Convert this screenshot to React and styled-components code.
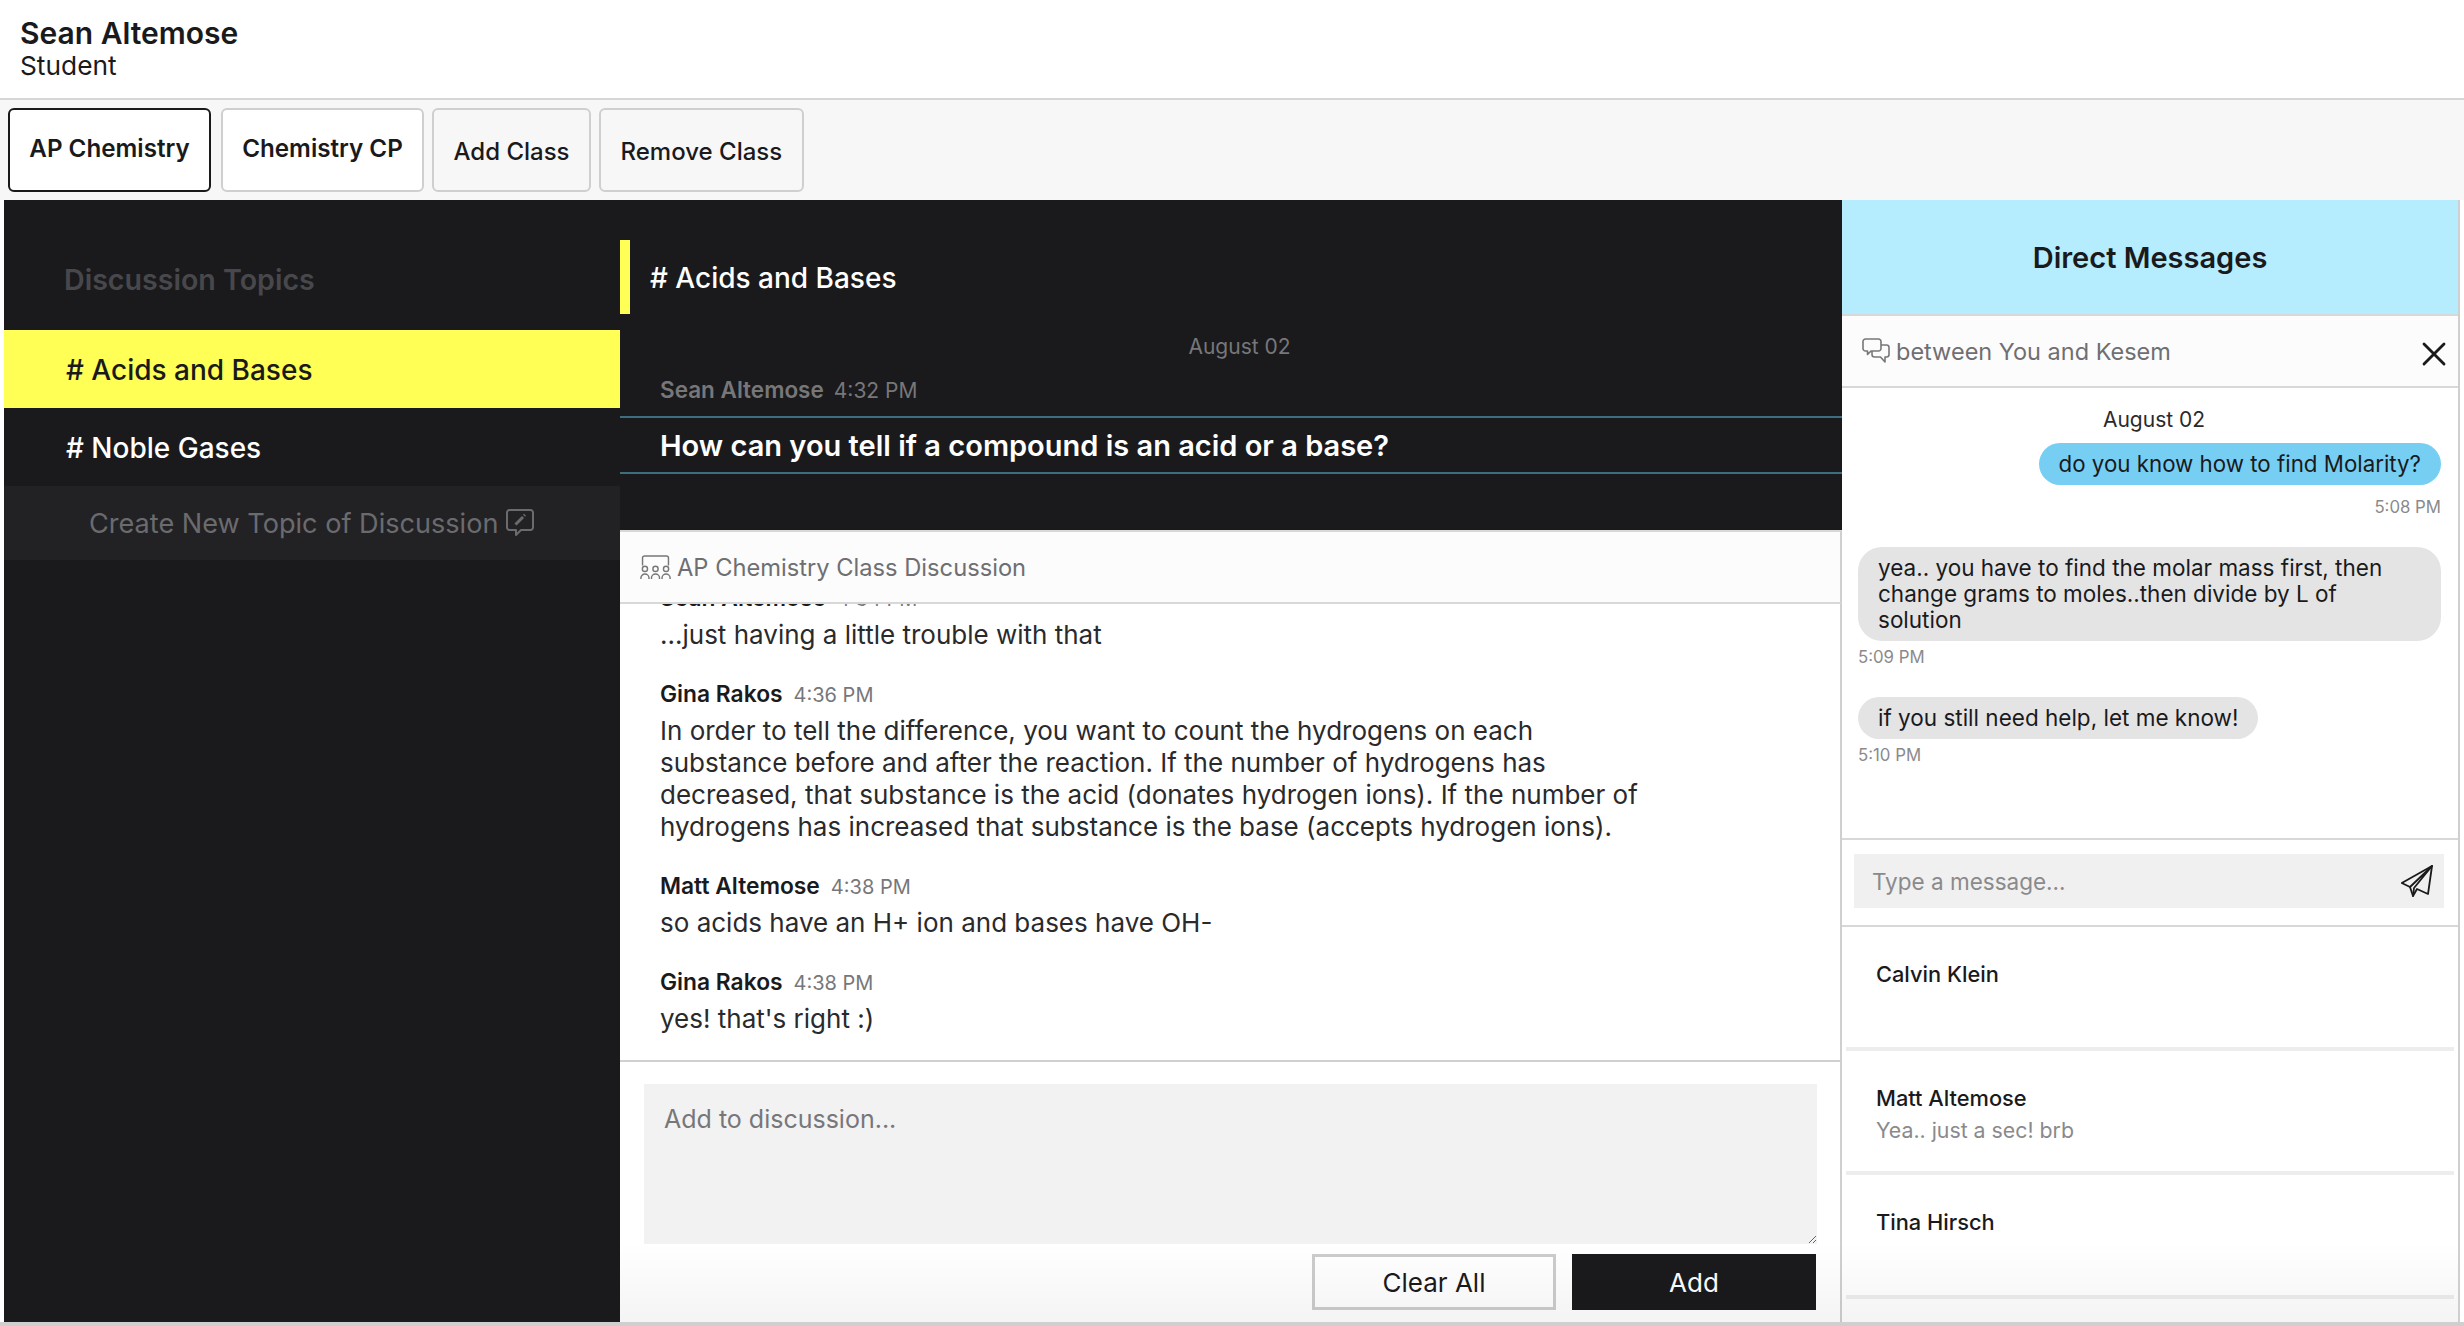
import React from "react";
import styled, { createGlobalStyle, css } from "styled-components";
import { X } from "lucide-react";

const GlobalStyle = createGlobalStyle`
  html, body {
    margin: 0;
    padding: 0;
    background: #fff;
  }
  * {
    box-sizing: border-box;
  }
  body {
    font-family: Inter, "Liberation Sans", sans-serif;
    color: #1a1a1c;
  }
`;

const fade = css`
  &::after {
    content: "";
    position: absolute;
    left: 0;
    right: 0;
    bottom: 0;
    height: 80px;
    background: linear-gradient(rgba(0, 0, 0, 0), rgba(0, 0, 0, 0.045));
    pointer-events: none;
  }
`;

function NewTopicIcon() {
  return (
    <svg width="28" height="28" viewBox="0 0 28 28" fill="none" stroke="#6b6b6f" strokeWidth="2" strokeLinejoin="round" strokeLinecap="round">
      <path d="M3.5 1h21a2.5 2.5 0 0 1 2.5 2.5v15a2.5 2.5 0 0 1-2.5 2.5H15l-5 5v-5H3.5A2.5 2.5 0 0 1 1 18.5v-15A2.5 2.5 0 0 1 3.5 1z" />
      <path d="M9.5 15.5L17 8" strokeWidth="3" strokeLinecap="butt" />
      <path d="M18 6.8l1-1" strokeWidth="3" strokeLinecap="butt" />
    </svg>
  );
}

function ClassIcon() {
  return (
    <svg width="31" height="24" viewBox="0 0 32 25" fill="none" stroke="#77777a" strokeWidth="1.5">
      <path d="M2.5 11V3a2 2 0 0 1 2-2h23a2 2 0 0 1 2 2v8" />
      <circle cx="5" cy="14.5" r="2.7" />
      <circle cx="16" cy="14.5" r="2.7" />
      <circle cx="27" cy="14.5" r="2.7" />
      <path d="M0.8 25v-1a4.2 4.2 0 0 1 8.4 0v1" />
      <path d="M11.8 25v-1a4.2 4.2 0 0 1 8.4 0v1" />
      <path d="M22.8 25v-1a4.2 4.2 0 0 1 8.4 0v1" />
    </svg>
  );
}

function ChatIcon() {
  return (
    <svg width="28" height="26" viewBox="0 0 28 26" fill="none" stroke="#77777a" strokeWidth="1.6" strokeLinejoin="round">
      <path d="M3.5 1h13a2.5 2.5 0 0 1 2.5 2.5v7a2.5 2.5 0 0 1-2.5 2.5H9l-3.5 3.5V13h-2A2.5 2.5 0 0 1 1 10.5v-7A2.5 2.5 0 0 1 3.5 1z" />
      <path d="M19 7h5.5A2.5 2.5 0 0 1 27 9.5v7a2.5 2.5 0 0 1-2.5 2.5H23v5l-4.5-5h-6a2.5 2.5 0 0 1-2.5-2.5V13" />
    </svg>
  );
}

function SendIcon() {
  return (
    <svg width="32" height="32" viewBox="0 0 32 32" fill="none" stroke="#1a1a1c" strokeWidth="1.8" strokeLinejoin="round" strokeLinecap="round">
      <path d="M31 1L0.8 18 9 22l3 9 4-7 11 5z" />
      <path d="M31 1L9 22M12 31l1-8L31 1" />
    </svg>
  );
}

const messages = [
  { id: 1, name: "Sean Altemose", time: "4:34 PM", text: "...just having a little trouble with that" },
  { id: 2, name: "Gina Rakos", time: "4:36 PM", text: "In order to tell the difference, you want to count the hydrogens on each substance before and after the reaction. If the number of hydrogens has decreased, that substance is the acid (donates hydrogen ions). If the number of hydrogens has increased that substance is the base (accepts hydrogen ions)." },
  { id: 3, name: "Matt Altemose", time: "4:38 PM", text: "so acids have an H+ ion and bases have OH-" },
  { id: 4, name: "Gina Rakos", time: "4:38 PM", text: "yes! that's right :)" },
];

const contacts = [
  { name: "Calvin Klein", preview: "" },
  { name: "Matt Altemose", preview: "Yea.. just a sec! brb" },
  { name: "Tina Hirsch", preview: "" },
  { name: "", preview: "" },
];

export default function App() {
  return (
    <Page>
      <GlobalStyle />
      <Header>
        <UserName>Sean Altemose</UserName>
        <UserRole>Student</UserRole>
      </Header>
      <TabBar>
        <Tab $active>AP Chemistry</Tab>
        <Tab>Chemistry CP</Tab>
        <ActionTab>Add Class</ActionTab>
        <ActionTab>Remove Class</ActionTab>
      </TabBar>
      <Main>
        <Topics>
          <TopicsTitle>Discussion Topics</TopicsTitle>
          <TopicRow $selected># Acids and Bases</TopicRow>
          <TopicRow># Noble Gases</TopicRow>
          <NewTopic>
            Create New Topic of Discussion
            <NewTopicIcon />
          </NewTopic>
        </Topics>

        <Discussion>
          <Question>
            <TopicHeading># Acids and Bases</TopicHeading>
            <QuestionDate>August 02</QuestionDate>
            <MessageMeta $dark>
              <AuthorName $dark>Sean Altemose</AuthorName>
              <MessageTime $dark>4:32 PM</MessageTime>
            </MessageMeta>
            <QuestionText>How can you tell if a compound is an acid or a base?</QuestionText>
          </Question>
          <ClassHeader>
            <ClassIcon />
            AP Chemistry Class Discussion
          </ClassHeader>
          <MessageList>
            {messages.map((m) => (
              <Message key={m.id}>
                <MessageMeta>
                  <AuthorName>{m.name}</AuthorName>
                  <MessageTime>{m.time}</MessageTime>
                </MessageMeta>
                <MessageText>{m.text}</MessageText>
              </Message>
            ))}
          </MessageList>
          <Composer>
            <ComposerInput placeholder="Add to discussion..." />
            <ComposerActions>
              <ClearButton>Clear All</ClearButton>
              <AddButton>Add</AddButton>
            </ComposerActions>
          </Composer>
        </Discussion>

        <Direct>
          <DirectTitle>Direct Messages</DirectTitle>
          <ChatHeader>
            <ChatWith>
              <ChatIcon />
              between You and Kesem
            </ChatWith>
            <CloseIcon size={40} strokeWidth={1.7} color="#1a1a1c" />
          </ChatHeader>
          <Chat>
            <ChatDate>August 02</ChatDate>
            <MineBubble>do you know how to find Molarity?</MineBubble>
            <BubbleTime $mine>5:08 PM</BubbleTime>
            <TheirBubble>yea.. you have to find the molar mass first, then change grams to moles..then divide by L of solution</TheirBubble>
            <BubbleTime>5:09 PM</BubbleTime>
            <TheirBubble>if you still need help, let me know!</TheirBubble>
            <BubbleTime>5:10 PM</BubbleTime>
          </Chat>
          <ChatInputRow>
            <ChatInputWrap>
              <ChatInput placeholder="Type a message..." />
              <SendIcon />
            </ChatInputWrap>
          </ChatInputRow>
          <Contacts>
            {contacts.map((c, i) => (
              <Contact key={i}>
                <ContactName>{c.name}</ContactName>
                <ContactPreview>{c.preview}</ContactPreview>
              </Contact>
            ))}
          </Contacts>
        </Direct>
      </Main>
    </Page>
  );
}

const Page = styled.div`
  height: 1326px;
  display: flex;
  flex-direction: column;
  overflow: hidden;
  border-bottom: 4px solid #cfcfcf;
`;

const Header = styled.header`
  height: 100px;
  flex: none;
  padding: 16px 20px 0;
  background: #fff;
  border-bottom: 2px solid #d6d6d6;
`;

const UserName = styled.div`
  font-size: 30px;
  font-weight: 600;
  line-height: 34px;
`;

const UserRole = styled.div`
  font-size: 26.3px;
  line-height: 32px;
`;

const TabBar = styled.nav`
  height: 100px;
  flex: none;
  display: flex;
  gap: 6px;
  padding: 8px 8px;
  background: #f7f7f7;
`;

const Tab = styled.button`
  width: 203px;
  height: 84px;
  border-radius: 6px;
  background: #fff;
  border: 2px solid ${(p) => (p.$active ? "#1a1a1c" : "#cfcfcf")};
  font-family: inherit;
  font-size: 24.2px;
  font-weight: 600;
  color: #1a1a1c;
  padding: 0 0 3px;
  margin-right: ${(p) => (p.$active ? "4px" : "0")};
`;

const ActionTab = styled(Tab)`
  width: auto;
  background: #f7f7f7;
  border-color: #cfcfcf;
  font-size: 24px;
  font-weight: 500;
  padding: 2px 19.5px 0;
  margin-left: 2px;
`;

const Main = styled.main`
  flex: 1;
  min-height: 0;
  display: flex;
  padding: 0 4px 0 4px;
  background: #fff;
`;

const Topics = styled.aside`
  width: 616px;
  flex: none;
  background: #1a1a1c;
`;

const TopicsTitle = styled.h2`
  margin: 0;
  height: 130px;
  padding: 62px 0 0 60px;
  font-size: 28.6px;
  font-weight: 600;
  line-height: 36px;
  color: #48484c;
`;

const TopicRow = styled.div`
  height: 78px;
  display: flex;
  align-items: center;
  padding: 1px 0 0 62px;
  font-size: 28px;
  font-weight: 500;
  color: ${(p) => (p.$selected ? "#1a1a1c" : "#fff")};
  background: ${(p) => (p.$selected ? "#ffff55" : "transparent")};
`;

const NewTopic = styled.div`
  height: 74px;
  display: flex;
  align-items: center;
  gap: 8px;
  padding-left: 85px;
  font-size: 27.1px;
  color: #6b6b6f;
  background: #222224;
`;

const Discussion = styled.section`
  position: relative;
  flex: 1;
  min-width: 0;
  display: flex;
  flex-direction: column;
  background: #fff;
  ${fade}
`;

const Question = styled.div`
  height: 330px;
  flex: none;
  padding-top: 40px;
  background: #1a1a1c;
  color: #fff;
`;

const TopicHeading = styled.h1`
  margin: 0;
  height: 74px;
  display: flex;
  align-items: center;
  padding: 1px 0 0 20px;
  border-left: 10px solid #ffff55;
  font-size: 28px;
  font-weight: 500;
  color: #fff;
`;

const QuestionDate = styled.div`
  margin-top: 19px;
  text-align: center;
  padding-left: 17px;
  font-size: 21px;
  line-height: 28px;
  color: #77777a;
`;

const MessageMeta = styled.div`
  display: flex;
  align-items: baseline;
  gap: ${(p) => (p.$dark ? "10px" : "11px")};
  padding-left: ${(p) => (p.$dark ? "40px" : "0")};
  margin-top: ${(p) => (p.$dark ? "14px" : "0")};
  height: ${(p) => (p.$dark ? "41px" : "auto")};
  line-height: 30px;
  color: ${(p) => (p.$dark ? "#77777a" : "#1a1a1c")};
`;

const AuthorName = styled.span`
  font-size: ${(p) => (p.$dark ? "22.5px" : "22.8px")};
  font-weight: 600;
`;

const MessageTime = styled.span`
  font-size: ${(p) => (p.$dark ? "21px" : "20px")};
  color: #77777a;
`;

const QuestionText = styled.div`
  height: 58px;
  display: flex;
  align-items: center;
  padding-left: 40px;
  border-top: 2px solid #3c6e80;
  border-bottom: 2px solid #3c6e80;
  font-size: 29px;
  font-weight: 600;
`;

const ClassHeader = styled.div`
  position: relative;
  z-index: 1;
  height: 74px;
  flex: none;
  display: flex;
  align-items: center;
  gap: 6px;
  padding-left: 20px;
  background: #fcfcfc;
  border-top: 2px solid #d8d8d8;
  border-bottom: 2px solid #d8d8d8;
  border-right: 2px solid #cfcfcf;
  font-size: 23.7px;
  color: #6f6f72;
`;

const MessageList = styled.div`
  flex: 1;
  min-height: 0;
  display: flex;
  flex-direction: column;
  justify-content: flex-end;
  overflow: hidden;
  gap: 28px;
  padding: 0 175px 25px 40px;
  background: #fff;
  border-right: 2px solid #cfcfcf;
`;

const Message = styled.div`
  flex: none;
`;

const MessageText = styled.div`
  margin-top: 5px;
  font-size: 26px;
  line-height: 32px;
  color: #2a2a2c;
`;

const Composer = styled.div`
  height: 262px;
  flex: none;
  padding: 22px 23px 0 24px;
  border-top: 2px solid #d0d0d0;
  border-right: 2px solid #cfcfcf;
  background: #fff;
`;

const ComposerInput = styled.textarea`
  display: block;
  width: 100%;
  height: 160px;
  border: none;
  outline: none;
  padding: 20px;
  background: #f2f2f2;
  font-family: inherit;
  font-size: 25px;
  line-height: 30px;
  &::placeholder {
    color: #77777a;
  }
`;

const ComposerActions = styled.div`
  display: flex;
  justify-content: flex-end;
  gap: 16px;
  margin-top: 10px;
  padding-right: 1px;
`;

const ClearButton = styled.button`
  width: 244px;
  height: 56px;
  background: transparent;
  border: 3px solid #cccccc;
  font-family: inherit;
  font-size: 26px;
  color: #1a1a1c;
`;

const AddButton = styled(ClearButton)`
  background: #1a1a1c;
  border-color: #1a1a1c;
  color: #fff;
`;

const Direct = styled.section`
  position: relative;
  width: 618px;
  flex: none;
  display: flex;
  flex-direction: column;
  border-right: 2px solid #cfcfcf;
  background: #fff;
  ${fade}
`;

const DirectTitle = styled.h2`
  margin: 0;
  height: 116px;
  flex: none;
  display: flex;
  align-items: center;
  justify-content: center;
  background: #b5ecfe;
  border-bottom: 2px solid #d8d8d8;
  font-size: 29px;
  font-weight: 600;
`;

const ChatHeader = styled.div`
  height: 72px;
  flex: none;
  display: flex;
  align-items: center;
  justify-content: space-between;
  padding: 0 4px 0 20px;
  background: #fcfcfc;
  border-bottom: 2px solid #d8d8d8;
`;

const ChatWith = styled.div`
  display: flex;
  align-items: center;
  gap: 6px;
  font-size: 23.5px;
  color: #6f6f72;
`;

const CloseIcon = styled(X)`
  margin-top: 6px;
`;

const Chat = styled.div`
  height: 452px;
  flex: none;
  display: flex;
  flex-direction: column;
  align-items: flex-start;
  padding: 17px 17px 0 16px;
  border-bottom: 2px solid #d8d8d8;
`;

const ChatDate = styled.div`
  align-self: center;
  padding-left: 9px;
  font-size: 21px;
  line-height: 30px;
  margin-bottom: 8px;
  color: #2a2a2c;
`;

const bubble = css`
  padding: 8px 20px;
  border-radius: 24px;
  font-size: 22.5px;
  line-height: 26px;
  color: #1a1a1c;
`;

const MineBubble = styled.div`
  ${bubble}
  align-self: flex-end;
  font-size: 22.3px;
  background: #76cff2;
`;

const TheirBubble = styled.div`
  ${bubble}
  background: #e4e4e4;
`;

const BubbleTime = styled.div`
  align-self: ${(p) => (p.$mine ? "flex-end" : "flex-start")};
  margin-top: ${(p) => (p.$mine ? "11px" : "5px")};
  margin-bottom: 29px;
  font-size: 16.8px;
  line-height: 22px;
  color: #8a8a8c;
`;

const ChatInputRow = styled.div`
  height: 87px;
  flex: none;
  padding: 14px 14px 0 12px;
  border-bottom: 2px solid #d8d8d8;
`;

const ChatInputWrap = styled.div`
  height: 54px;
  display: flex;
  align-items: center;
  padding: 0 11px 0 18px;
  background: #f0f0f0;
`;

const ChatInput = styled.input`
  flex: 1;
  min-width: 0;
  padding: 0;
  border: none;
  outline: none;
  background: transparent;
  font-family: inherit;
  font-size: 22.5px;
  &::placeholder {
    color: #8a8a8c;
  }
`;

const Contacts = styled.div`
  flex: 1;
  min-height: 0;
  overflow: hidden;
  padding: 0 4px;
`;

const Contact = styled.div`
  height: 124px;
  padding: 32px 30px 0 30px;
  background: #fff;
  border-bottom: 4px solid #ededed;
`;

const ContactName = styled.div`
  font-size: 21.8px;
  font-weight: 500;
  line-height: 30px;
`;

const ContactPreview = styled.div`
  margin-top: 2px;
  font-size: 21.3px;
  line-height: 30px;
  color: #8a8a8c;
`;
